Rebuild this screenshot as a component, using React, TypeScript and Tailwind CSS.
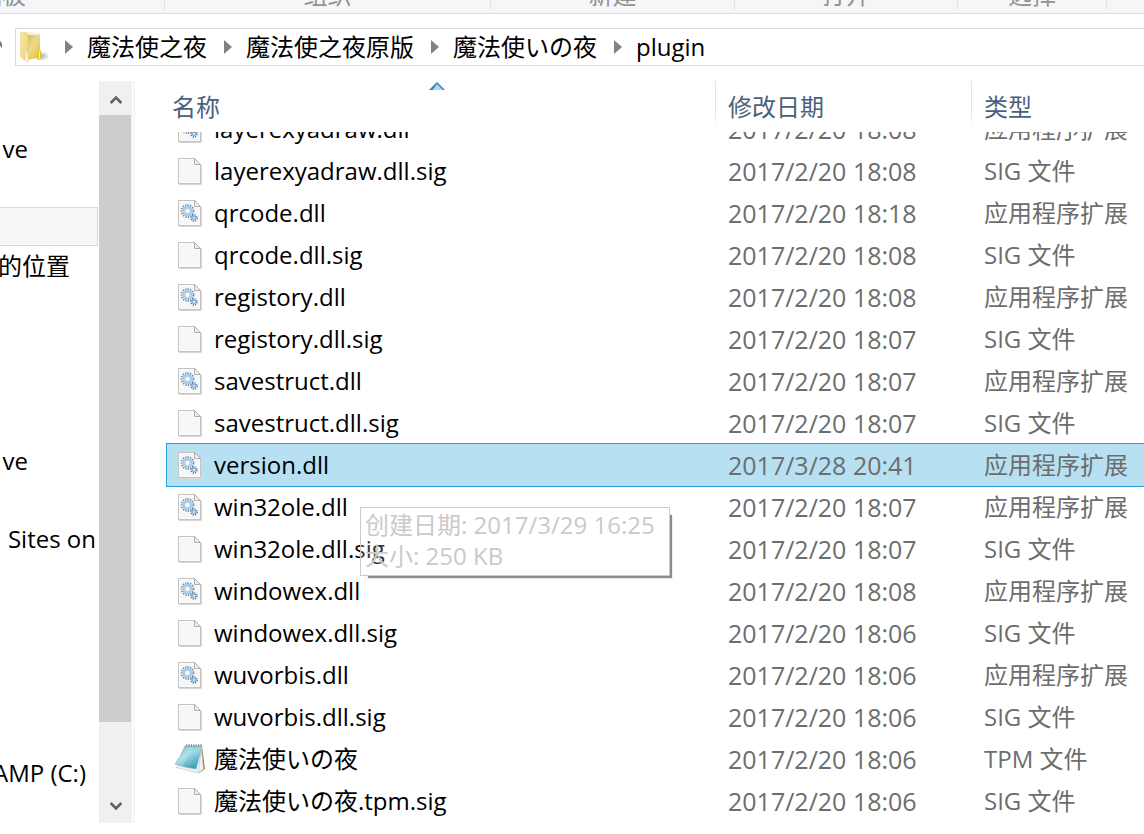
import { useState } from 'react';

type FileKind = 'dll' | 'sig' | 'tpm';

interface FileEntry {
  name: string;
  date: string;
  kind: FileKind;
}

const typeLabels: Record<FileKind, string> = {
  dll: '应用程序扩展',
  sig: 'SIG 文件',
  tpm: 'TPM 文件'
};

const files: FileEntry[] = [
  { name: 'layerexyadraw.dll', date: '2017/2/20 18:08', kind: 'dll' },
  { name: 'layerexyadraw.dll.sig', date: '2017/2/20 18:08', kind: 'sig' },
  { name: 'qrcode.dll', date: '2017/2/20 18:18', kind: 'dll' },
  { name: 'qrcode.dll.sig', date: '2017/2/20 18:08', kind: 'sig' },
  { name: 'registory.dll', date: '2017/2/20 18:08', kind: 'dll' },
  { name: 'registory.dll.sig', date: '2017/2/20 18:07', kind: 'sig' },
  { name: 'savestruct.dll', date: '2017/2/20 18:07', kind: 'dll' },
  { name: 'savestruct.dll.sig', date: '2017/2/20 18:07', kind: 'sig' },
  { name: 'version.dll', date: '2017/3/28 20:41', kind: 'dll' },
  { name: 'win32ole.dll', date: '2017/2/20 18:07', kind: 'dll' },
  { name: 'win32ole.dll.sig', date: '2017/2/20 18:07', kind: 'sig' },
  { name: 'windowex.dll', date: '2017/2/20 18:08', kind: 'dll' },
  { name: 'windowex.dll.sig', date: '2017/2/20 18:06', kind: 'sig' },
  { name: 'wuvorbis.dll', date: '2017/2/20 18:06', kind: 'dll' },
  { name: 'wuvorbis.dll.sig', date: '2017/2/20 18:06', kind: 'sig' },
  { name: '魔法使いの夜', date: '2017/2/20 18:06', kind: 'tpm' },
  { name: '魔法使いの夜.tpm.sig', date: '2017/2/20 18:06', kind: 'sig' }
];

const ribbonGroups = [
  { label: '剪贴板', width: '-ml-[184px] w-[349px]' },
  { label: '组织', width: 'w-[326px]' },
  { label: '新建', width: 'w-[244px]' },
  { label: '打开', width: 'w-[223px]' },
  { label: '选择', width: 'w-[149px]' }
];

const crumbs = ['魔法使之夜', '魔法使之夜原版', '魔法使いの夜', 'plugin'];

// One entry per row of the navigation tree, empty rows included
const treeRows = [
  { text: '', pad: '' },
  { text: 've', pad: 'pr-[70px]' },
  { text: '', pad: '' },
  { text: '', pad: '', active: true },
  { text: '的位置', pad: 'pr-7' },
  { text: '', pad: '' },
  { text: '', pad: '' },
  { text: '', pad: '' },
  { text: '', pad: '' },
  { text: 've', pad: 'pr-[70px]' },
  { text: '', pad: '' },
  { text: 'Sites on', pad: 'pr-0.5' },
  { text: '', pad: '' },
  { text: '', pad: '' },
  { text: '', pad: '' },
  { text: '', pad: '' },
  { text: '', pad: '' },
  { text: 'AMP (C:)', pad: 'pr-3' }
];

function FolderIcon() {
  return (
    <svg className="h-8 w-8 shrink-0" viewBox="0 0 32 32" aria-hidden="true">
      <defs>
        <linearGradient id="folderBack" x1="0" y1="0" x2="1" y2="1">
          <stop offset="0" stopColor="#c9a648" />
          <stop offset="0.5" stopColor="#ecd98c" />
          <stop offset="1" stopColor="#e6c02f" />
        </linearGradient>
        <linearGradient id="folderFront" x1="0" y1="0" x2="1" y2="1">
          <stop offset="0" stopColor="#f6e9a8" />
          <stop offset="0.6" stopColor="#efdc8c" />
          <stop offset="1" stopColor="#d9b94e" />
        </linearGradient>
        <radialGradient id="folderShade">
          <stop offset="0" stopColor="#777" stopOpacity="0.6" />
          <stop offset="1" stopColor="#777" stopOpacity="0" />
        </radialGradient>
      </defs>
      <ellipse cx="21" cy="25" rx="9" ry="5" fill="url(#folderShade)" />
      <path d="M3 1.500 20 2.500V26L8 29Z" fill="url(#folderBack)" />
      <path d="M4 1 19.500 2V4H8Z" fill="#f8f0c8" />
      <path
        d="M.5 1.500Q.5.300 2 1L7 3.500Q8 4 8 5.500V31L1.500 27Q.5 26.500.5 25Z"
        fill="url(#folderFront)"
        stroke="#e5cd76"
        strokeWidth="0.5"
      />
      <path d="M6 18 8 24V31L5 29Z" fill="#fff" opacity="0.7" />
      <path d="M18.500 21Q18.500 19.500 20.500 19.500V28L18.500 28.500Z" fill="#fff3a0" stroke="#dfbd1f" strokeWidth="0.8" />
    </svg>
  );
}

function PageIcon({ gears }: { gears: boolean }) {
  return (
    <svg className="h-7 w-6" viewBox="0 0 24 28" aria-hidden="true">
      <path d="M1 27.500H23.500V8" fill="none" stroke="#d6d6d6" />
      <path d="M.5 1.500H16.500L22.500 7.500V26.500H.5Z" fill="#fafafa" stroke="#c4c4c4" />
      <path d="M2 3H15V9H21V25H2Z" fill="#f3f3f3" opacity="0.5" />
      <path d="M16.500 1.500V7.500H22.500Z" fill="#f0f0f0" stroke="#adadad" />
      {gears && (
        <>
          <circle cx="9.500" cy="12" r="6" fill="none" stroke="#5f8db5" strokeWidth="1.800" strokeDasharray="1.300 1.213" />
          <circle cx="9.500" cy="12" r="4.300" fill="#fff" stroke="#a9cbe6" strokeWidth="2.200" />
          <circle cx="9.500" cy="12" r="2.800" fill="#fafcfd" stroke="#7fa5c8" strokeWidth="0.700" />
          <circle cx="16" cy="19" r="3" fill="none" stroke="#51779e" strokeWidth="1.500" strokeDasharray="1.200 1.156" />
          <circle cx="16" cy="19" r="1.700" fill="#edf5fa" stroke="#86aed1" strokeWidth="1.300" />
        </>
      )}
    </svg>
  );
}

function NotepadIcon() {
  return (
    <svg className="h-8 w-8" viewBox="0 0 32 32" aria-hidden="true">
      <defs>
        <linearGradient id="notepad" x1="0" y1="0" x2="0.6" y2="1">
          <stop offset="0" stopColor="#6fb6c8" />
          <stop offset="0.5" stopColor="#9ed9e4" />
          <stop offset="1" stopColor="#3f9fb6" />
        </linearGradient>
      </defs>
      <path d="M28 3 31 26 25 30Z" fill="#a8803c" />
      <path d="M27 3 29.500 26 24 30 2 24.500 12 18Z" fill="#eef3f7" stroke="#b6c2cc" strokeWidth="0.6" />
      <path d="M27.500 6 24 29" stroke="#bcc8d2" strokeWidth="0.700" />
      <path d="M11 3H28L22 26Q12 25 1 21Q7 13 11 3Z" fill="url(#notepad)" stroke="#6aa9b8" strokeWidth="0.500" />
      <path d="M12 4H20Q13 14 9 23L2 21Q8 13 12 4Z" fill="#fff" opacity="0.200" />
      <path d="M12 2.500H28" stroke="#8a8a8a" strokeWidth="2.500" strokeDasharray="1.200 1.200" />
    </svg>
  );
}

function Ribbon() {
  return (
    <div className="flex h-3.5 items-start overflow-hidden border-b border-[#dadbdc] bg-[#f5f6f7] text-[#929292]">
      {ribbonGroups.map((group) => (
        <div
          key={group.label}
          className={`flex h-2.5 shrink-0 items-end justify-center border-r border-[#e2e3e4] ${group.width}`}
        >
          <span className="leading-[30px]">{group.label}</span>
        </div>
      ))}
    </div>
  );
}

function AddressBar() {
  return (
    <div className="flex items-stretch pt-3.5">
      <button aria-label="上移" className="flex w-[15px] items-center overflow-hidden pb-1">
        <svg className="h-2 w-[3px]" viewBox="0 0 3 8" aria-hidden="true">
          <path d="M0 0 2 2.500V7L0 4.500Z" fill="#777" />
        </svg>
      </button>
      <nav className="flex h-[38px] min-w-0 flex-1 items-center overflow-hidden border-y border-l border-[#d9d9d9] pl-1">
        <FolderIcon />
        {crumbs.map((crumb) => (
          <div key={crumb} className="flex shrink-0 items-center">
            <svg className="mr-3.5 ml-[13px] h-3.5 w-2" viewBox="0 0 8 14" aria-hidden="true">
              <path d="M0 0 8 7 0 14Z" fill="#838383" />
            </svg>
            <button className="mr-1 leading-8">{crumb}</button>
          </div>
        ))}
      </nav>
    </div>
  );
}

function NavigationTree() {
  return (
    <aside className="w-[98px] shrink-0 overflow-hidden pt-[9px]">
      {treeRows.map((row, i) => (
        <div
          key={i}
          className={`flex h-[39px] items-center justify-end whitespace-nowrap ${row.pad} ${
            row.active ? 'border-y border-r border-[#d9d9d9] bg-[#f7f7f7]' : ''
          }`}
        >
          {row.text}
        </div>
      ))}
    </aside>
  );
}

function Scrollbar() {
  return (
    <div className="ml-px flex w-[33px] shrink-0 flex-col bg-[#f0f0f0]">
      <button aria-label="向上滚动" className="flex h-[34px] items-center justify-center pt-1">
        <svg className="h-2.5 w-3" viewBox="0 0 12 10" aria-hidden="true">
          <path d="M.7 8 6 2.700 11.300 8" fill="none" stroke="#606060" strokeWidth="2.600" />
        </svg>
      </button>
      <div className="flex-1">
        <div className="mr-px h-[90%] bg-[#cdcdcd]" />
      </div>
      <button aria-label="向下滚动" className="flex h-[34px] items-center justify-center">
        <svg className="h-2.5 w-3" viewBox="0 0 12 10" aria-hidden="true">
          <path d="M.7 2 6 7.300 11.300 2" fill="none" stroke="#606060" strokeWidth="2.600" />
        </svg>
      </button>
    </div>
  );
}

function HeaderDivider() {
  return <span className="h-[46px] w-px shrink-0 bg-linear-to-b from-[#dbe6f0] from-70% to-white" />;
}

export default function App() {
  const [selected, setSelected] = useState('version.dll');

  return (
    <div className="min-h-screen overflow-hidden bg-white font-['Open_Sans','Noto_Sans_CJK_SC',sans-serif] text-2xl text-black">
      <Ribbon />
      <AddressBar />

      <div className="flex pt-[15px]">
        <NavigationTree />
        <Scrollbar />
        <div className="ml-px w-0.5 shrink-0 bg-[#f7f7f7]" />

        <main className="relative min-w-0 flex-1 overflow-hidden pb-px pl-8">
          <table className="w-full table-fixed border-collapse whitespace-nowrap">
            <thead>
              <tr className="h-[51px] text-left align-top text-[#4c607a]">
                <th className="w-[548px] p-0 font-normal">
                  <button className="relative flex h-[51px] w-full items-center pl-[5px]">
                    名称
                    <svg className="absolute top-px left-[262px] h-2 w-4" viewBox="0 0 16 8" aria-hidden="true">
                      <path d="M8 0 16 8H0Z" fill="#3c7fb1" />
                      <path d="M8 2 14 8H3.500Z" fill="#a5d9f3" />
                    </svg>
                  </button>
                </th>
                <th className="w-64 p-0 font-normal">
                  <div className="flex">
                    <HeaderDivider />
                    <button className="h-[51px] pl-3">修改日期</button>
                  </div>
                </th>
                <th className="p-0 font-normal">
                  <div className="flex">
                    <HeaderDivider />
                    <button className="h-[51px] pl-3">类型</button>
                  </div>
                </th>
              </tr>
            </thead>
            <tbody>
              {files.map((file, i) => {
                // the first row is scrolled half under the header
                const cell = i === 0 ? 'flex h-[18px] items-end overflow-hidden' : 'flex h-[42px] items-end';
                return (
                  <tr
                    key={file.name}
                    onClick={() => setSelected(file.name)}
                    className={
                      selected === file.name ? 'bg-[#b7e0f2] outline-1 outline-[#26a0da]' : ''
                    }
                  >
                    <td className="p-0">
                      <div className={cell}>
                        <div className="flex h-[42px] shrink-0 items-center leading-8">
                          <span className="mr-0.5 flex w-[45px] shrink-0 justify-center">
                            {file.kind === 'tpm' ? (
                              <NotepadIcon />
                            ) : (
                              <PageIcon gears={file.kind === 'dll'} />
                            )}
                          </span>
                          {file.name}
                        </div>
                      </div>
                    </td>
                    <td className="p-0 pl-[13px] text-[25px] text-[#6d6d6d]">
                      <div className={cell}>
                        <span className="shrink-0 leading-[42px]">{file.date}</span>
                      </div>
                    </td>
                    <td className="p-0 pl-[13px] text-[#6d6d6d]">
                      <div className={cell}>
                        <span className="shrink-0 leading-[42px]">{typeLabels[file.kind]}</span>
                      </div>
                    </td>
                  </tr>
                );
              })}
            </tbody>
          </table>

          {/* Tooltip, half faded in */}
          <div
            role="tooltip"
            className="absolute top-[426px] left-[225px] min-w-[310px] border border-[#cccccc] bg-white/20 px-1 pt-px pb-1 leading-[31px] whitespace-nowrap text-[#cacaca] shadow-[5px_5px_1px_-3px_#8c8c8c]"
          >
            <p>创建日期: 2017/3/29 16:25</p>
            <p>大小: 250 KB</p>
          </div>
        </main>
      </div>
    </div>
  );
}
